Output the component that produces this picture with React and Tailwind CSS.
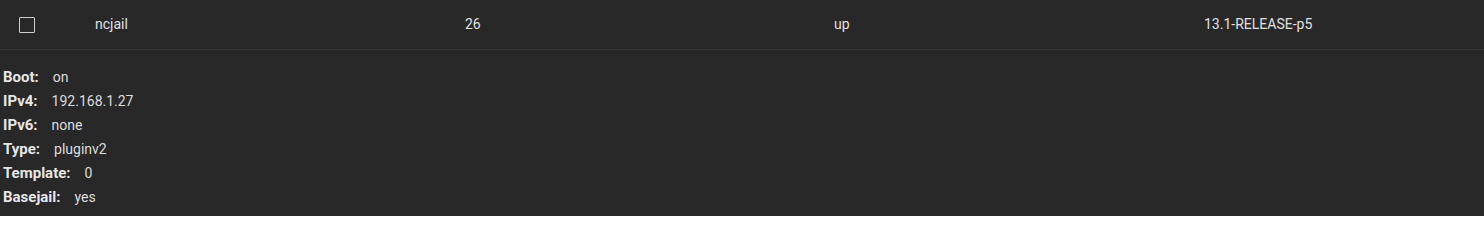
import React from 'react';

const jail = {
    name: 'ncjail',
    jid: '26',
    state: 'up',
    release: '13.1-RELEASE-p5',
};

const details = [
    { label: 'Boot:', value: 'on' },
    { label: 'IPv4:', value: '192.168.1.27' },
    { label: 'IPv6:', value: 'none' },
    { label: 'Type:', value: 'pluginv2' },
    { label: 'Template:', value: '0' },
    { label: 'Basejail:', value: 'yes' },
];

const App = () => {
    return (
        <div className="w-[1484px] h-[216px] bg-[#282828] text-[14px] text-[#e0e0e0] font-['Roboto',sans-serif] overflow-hidden">
            <div className="grid grid-cols-[95px_370px_369px_370px_1fr] items-center h-[50px] border-b border-[#353535]">
                <div className="pl-[19px] flex items-center">
                    <span className="block w-4 h-4 border-[1.5px] border-[#cfcfcf] rounded-[1px]"></span>
                </div>
                <div>{jail.name}</div>
                <div>{jail.jid}</div>
                <div>{jail.state}</div>
                <div>{jail.release}</div>
            </div>

            <div className="pt-[15px] pl-[3px]">
                {details.map((d) => (
                    <div key={d.label} className="flex items-center h-6">
                        <span className="font-bold text-[15px] text-[#e6e6e6]">{d.label}</span>
                        <span className="ml-[14px] text-[#dcdcdc]">{d.value}</span>
                    </div>
                ))}
            </div>
        </div>
    );
};

export default App;
